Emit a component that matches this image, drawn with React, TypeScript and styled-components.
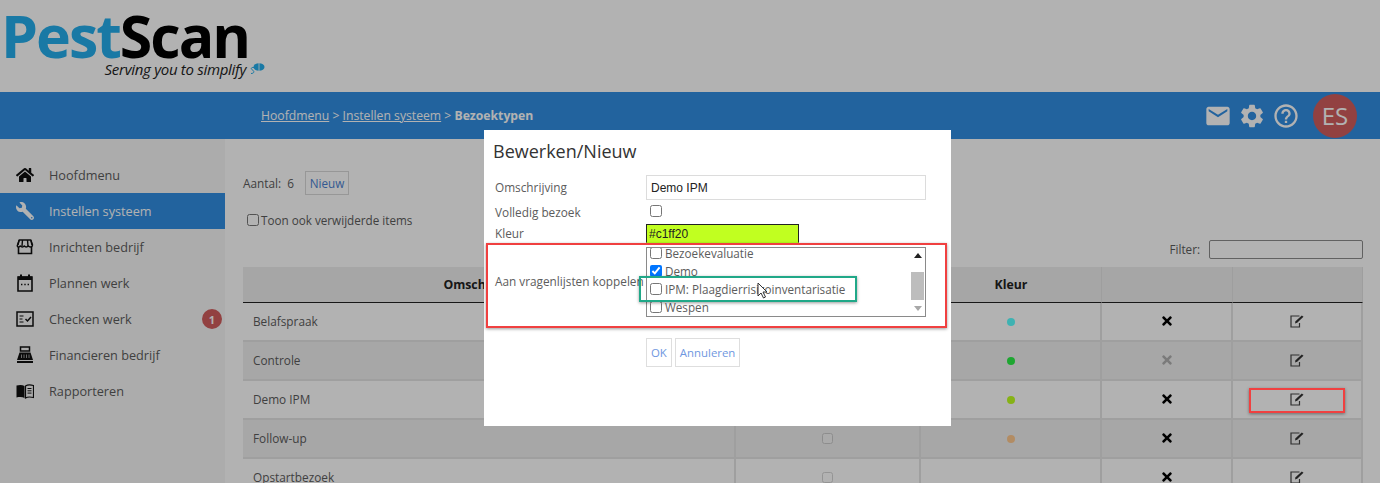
import React from "react";
import styled, { createGlobalStyle } from "styled-components";
import { FaHome, FaWrench, FaTimes } from "react-icons/fa";
import { MdMail, MdSettings, MdHelpOutline } from "react-icons/md";

const GlobalStyle = createGlobalStyle`
  html, body {
    margin: 0;
    padding: 0;
    background: #fff;
    font-family: "Open Sans", "Liberation Sans", sans-serif;
    font-size: 13px;
    color: #5c5c5c;
  }
`;

const Page = styled.div`
  position: relative;
  width: 1380px;
  height: 483px;
  overflow: hidden;
  background: #fff;
`;

const LogoBar = styled.div`
  height: 92px;
  box-sizing: border-box;
  padding-left: 1px;
`;

const LogoWrap = styled.div`
  width: 264px;
`;

const LogoName = styled.div`
  font-size: 59px;
  font-weight: 700;
  line-height: 60px;
  padding-top: 5px;
  letter-spacing: -2px;
  white-space: nowrap;
  color: #000;
  span {
    color: #25aeec;
  }
`;

const LogoTagline = styled.div`
  display: flex;
  align-items: center;
  justify-content: flex-end;
  gap: 3px;
  margin-top: -4px;
  font-size: 15px;
  line-height: 16px;
  font-style: italic;
  letter-spacing: -0.3px;
  color: #222;
`;

const TopBar = styled.div`
  height: 47px;
  display: flex;
  align-items: center;
  box-sizing: border-box;
  padding: 0 23px 0 261px;
  background: #328fe3;
  color: #fff;
`;

const Crumbs = styled.div`
  font-size: 12.2px;
  margin-top: -1px;
  a {
    color: #fff;
    text-decoration: underline;
  }
  strong {
    font-weight: 700;
  }
`;

const TopActions = styled.div`
  margin-left: auto;
  display: flex;
  align-items: center;
  gap: 6px;
  color: #fff;
`;

const Avatar = styled.div`
  width: 44px;
  height: 44px;
  margin-left: 7px;
  border-radius: 50%;
  background: #d25d5d;
  display: flex;
  align-items: center;
  justify-content: center;
  font-size: 24px;
  color: #fff;
`;

const Body = styled.div`
  display: flex;
`;

const Sidebar = styled.nav`
  width: 225px;
  height: 344px;
  flex: none;
  box-sizing: border-box;
  padding-top: 18px;
  background: #f7f7f7;
`;

const NavItem = styled.div<{ $active?: boolean }>`
  position: relative;
  height: 36px;
  display: flex;
  align-items: center;
  box-sizing: border-box;
  padding-left: 16px;
  gap: 15px;
  font-size: 12.7px;
  background: ${(p) => (p.$active ? "#328fe3" : "transparent")};
  color: ${(p) => (p.$active ? "#fff" : "#5c5c5c")};
  svg {
    flex: none;
    color: ${(p) => (p.$active ? "#fff" : "#111")};
  }
`;

const NavBadge = styled.span`
  position: absolute;
  right: 3px;
  top: 8px;
  width: 20px;
  height: 20px;
  border-radius: 50%;
  background: #d25d5d;
  color: #fff;
  font-size: 11px;
  font-weight: 700;
  display: flex;
  align-items: center;
  justify-content: center;
`;

const Content = styled.main`
  flex: 1;
  box-sizing: border-box;
  padding: 32px 17px 0 18px;
`;

const CountRow = styled.div`
  display: flex;
  align-items: center;
  height: 24px;
  font-size: 11.8px;
`;

const NewButton = styled.button`
  margin-left: 11px;
  width: 44px;
  height: 24px;
  padding: 0;
  background: #fff;
  border: 1px solid #d8d8d8;
  color: #4a7fd0;
  font: 11.7px "Open Sans", sans-serif;
`;

const ToggleRow = styled.label`
  display: flex;
  align-items: center;
  gap: 2px;
  height: 20px;
  margin-top: 15px;
  margin-left: 4px;
  font-size: 11.7px;
`;

const Check = styled.input.attrs({ type: "checkbox" })`
  width: 12px;
  height: 12px;
  margin: 0;
  flex: none;
`;

const FilterRow = styled.div`
  display: flex;
  justify-content: flex-end;
  align-items: center;
  gap: 9px;
  height: 20px;
  margin-top: 9px;
  font-size: 11.7px;
`;

const FilterInput = styled.input`
  width: 154px;
  height: 19px;
  box-sizing: border-box;
  border: 1px solid #8c8c8c;
  border-radius: 2px;
  background: #fff;
`;

const Table = styled.table`
  width: 1120px;
  margin-top: 8px;
  table-layout: fixed;
  border-collapse: separate;
  border-spacing: 0;
`;

const Col = styled.col<{ $w: number }>`
  width: ${(p) => p.$w}px;
`;

const Th = styled.th`
  height: 35px;
  padding: 0;
  background: #eeeeee;
  border-bottom: 1px solid #222;
  border-right: 1px solid #e2e2e2;
  color: #222;
  font-size: 12.3px;
  font-weight: 700;
  text-align: center;
  &:first-child {
    padding-right: 10px;
  }
`;

const Row = styled.tr<{ $alt: boolean }>`
  background: ${(p) => (p.$alt ? "#f0f0f0" : "#fff")};
`;

const Td = styled.td<{ $left?: boolean }>`
  height: 39px;
  box-sizing: border-box;
  padding: 0 0 ${(p) => (p.$left ? "2px 10px" : "0 0")};
  border-bottom: 2px solid #e4e4e4;
  border-right: 2px solid #e4e4e4;
  text-align: ${(p) => (p.$left ? "left" : "center")};
  font-size: 11.8px;
  vertical-align: middle;
`;

const Dot = styled.span<{ $color: string }>`
  display: inline-block;
  width: 8px;
  height: 8px;
  margin-bottom: 1px;
  border-radius: 50%;
  background: ${(p) => p.$color};
`;

const RowCheck = styled(Check)`
  width: 11px;
  height: 11px;
  margin-bottom: 3px;
  vertical-align: middle;
  opacity: 0.3;
`;

const Delete = styled(FaTimes)<{ $muted: boolean }>`
  color: ${(p) => (p.$muted ? "#b0b0b0" : "#000")};
  vertical-align: middle;
  margin-bottom: 3px;
`;

const Backdrop = styled.div`
  position: absolute;
  inset: 0;
  background: rgba(0, 0, 0, 0.3);
`;

const Modal = styled.div`
  position: absolute;
  left: 484px;
  top: 130px;
  width: 467px;
  height: 296px;
  box-sizing: border-box;
  padding: 9px 25px 0 11px;
  background: #fff;
`;

const ModalTitle = styled.h2`
  margin: 0 0 0 -2px;
  font-size: 18px;
  font-weight: 400;
  line-height: 24px;
  color: #333;
`;

const FormGrid = styled.div`
  display: grid;
  grid-template-columns: 151px 280px;
  grid-template-rows: 25px 24px 19px 74px;
  margin-top: 12px;
  align-items: center;
  font-size: 11.8px;
  color: #5c5c5c;
`;

const FieldLabel = styled.span`
  margin-bottom: 2px;
`;

const TextInput = styled.input`
  width: 280px;
  height: 25px;
  box-sizing: border-box;
  padding: 0 4px;
  border: 1px solid #dcdcdc;
  font: 12px "Liberation Sans", Arial, sans-serif;
  color: #222;
`;

const FormCheck = styled(Check)`
  margin-left: 4px;
  margin-top: -2px;
`;

const ColorInput = styled.input`
  width: 153px;
  height: 19px;
  box-sizing: border-box;
  padding: 0 2px;
  border: 1px solid #222;
  border-bottom-color: #b9ff1f;
  background: #c1ff20;
  font: 12px "Liberation Sans", Arial, sans-serif;
  color: #222;
`;

const ListLabel = styled.div`
  grid-row: 4;
  align-self: center;
  margin-top: 2px;
  white-space: nowrap;
`;

const ListBox = styled.div`
  grid-row: 4;
  grid-column: 2;
  align-self: start;
  margin-top: 4px;
  height: 70px;
  box-sizing: border-box;
  display: flex;
  border: 1px solid #8a8a8a;
  overflow: hidden;
  background: #fff;
`;

const ListRows = styled.div`
  flex: 1;
  overflow: hidden;
  padding-left: 3px;
`;

const ListRowsInner = styled.div`
  margin-top: -4px;
`;

const ListRow = styled.label`
  display: flex;
  align-items: center;
  gap: 3px;
  height: 18px;
  font-size: 11.7px;
  color: #5c5c5c;
  white-space: nowrap;
`;

const Scrollbar = styled.div`
  width: 15px;
  flex: none;
  display: flex;
  flex-direction: column;
  align-items: center;
  justify-content: space-between;
  padding: 5px 0;
  box-sizing: border-box;
  position: relative;
  background: #fff;
`;

const ArrowUp = styled.span`
  width: 0;
  height: 0;
  border-left: 4px solid transparent;
  border-right: 4px solid transparent;
  border-bottom: 5px solid #222;
`;

const ArrowDown = styled.span`
  width: 0;
  height: 0;
  border-left: 4px solid transparent;
  border-right: 4px solid transparent;
  border-top: 5px solid #a8a8a8;
`;

const ScrollThumb = styled.div`
  position: absolute;
  left: 1px;
  top: 24px;
  width: 13px;
  height: 28px;
  background: #bdbdbd;
`;

const ModalActions = styled.div`
  display: flex;
  gap: 3px;
  margin-top: 21px;
  margin-left: 151px;
`;

const ModalButton = styled.button`
  height: 29px;
  padding: 0 4px;
  background: #fff;
  border: 1px solid #dedede;
  color: #6f97e0;
  font: 11.4px "Open Sans", sans-serif;
`;

const Mark = styled.div<{ $x: number; $y: number; $w: number; $h: number; $color: string }>`
  position: absolute;
  left: ${(p) => p.$x}px;
  top: ${(p) => p.$y}px;
  width: ${(p) => p.$w}px;
  height: ${(p) => p.$h}px;
  box-sizing: border-box;
  border: 2px solid ${(p) => p.$color};
  box-shadow: 0 1px 3px rgba(0, 0, 0, 0.4);
`;

const Cursor = styled.svg`
  position: absolute;
  left: 757px;
  top: 282px;
`;

const EditSvg = styled.svg`
  vertical-align: middle;
  margin-bottom: 2px;
`;

const BugMark = () => (
  <svg width="16" height="14" viewBox="0 0 16 14">
    <ellipse cx="10" cy="5" rx="5.500" ry="3.800" fill="#25aeec" />
    <rect x="9.600" y="1" width="0.800" height="8" fill="#fff" />
    <path d="M5 5.500C2 5 1.500 7 3.500 8 5.500 9 5.500 11.500 2 11.500" fill="none" stroke="#25aeec" strokeWidth="1" />
  </svg>
);

const StoreIcon = () => (
  <svg width="18" height="18" viewBox="0 0 18 18">
    <path d="M3.200 2h11.600l1.700 4.800c0 1.500-1.200 2.200-2.200 2.200-.9 0-1.600-.5-2-1.100-.4.600-1.200 1.100-2.100 1.100-.8 0-1.600-.5-1.900-1.100-.4.600-1.100 1.100-2 1.100s-1.600-.5-2-1.100C3.900 8.500 3.200 9 2.600 9 1.600 9 .8 8 1.500 6.800z" fill="#f7f7f7" stroke="#111" strokeWidth="1.400" strokeLinejoin="round" />
    <path d="M6.500 2 6 8M11.500 2l.5 6M3.200 2 2 7M14.800 2 16 7" stroke="#111" strokeWidth="1.400" fill="none" />
    <path d="M2.500 9v6.500h13V9" fill="none" stroke="#111" strokeWidth="1.600" />
  </svg>
);

const CalendarIcon = () => (
  <svg width="18" height="18" viewBox="0 0 18 18">
    <path d="M2 3h14v14H2z" fill="none" stroke="#111" strokeWidth="1.600" />
    <path d="M2 2.500h14v3.500H2z" fill="#111" />
    <rect x="4" y="0.500" width="2" height="3" fill="#111" />
    <rect x="12" y="0.500" width="2" height="3" fill="#111" />
    <path d="M5 10.500h1.400M8.300 10.500h1.400M11.600 10.500h1.400" stroke="#111" strokeWidth="1.300" />
  </svg>
);

const ChecklistIcon = () => (
  <svg width="18" height="18" viewBox="0 0 18 18">
    <rect x="1" y="2" width="16" height="14" fill="none" stroke="#111" strokeWidth="1.500" />
    <path d="M3.500 6h4M3.500 9h3M3.500 12h4" stroke="#111" strokeWidth="1.200" />
    <path d="M9.500 9l2 2 3.500-4" fill="none" stroke="#111" strokeWidth="1.500" />
  </svg>
);

const RegisterIcon = () => (
  <svg width="18" height="18" viewBox="0 0 18 18">
    <path d="M4.500 1h9v4h-9z" fill="none" stroke="#111" strokeWidth="1.500" />
    <path d="M3.500 6.500h11L17 14H1z" fill="#111" />
    <path d="M5.500 8.500v3.500M8 8.500v3.500M10.500 8.500v3.500M13 8.500v3.500" stroke="#aaa" strokeWidth="0.900" />
    <rect x="1" y="15" width="16" height="2" fill="#111" />
  </svg>
);

const BookIcon = () => (
  <svg width="18" height="18" viewBox="0 0 18 18">
    <path d="M0.500 3.500c3-.8 6-.8 8 .5v12c-2-1.200-5-1.200-8-.5z" fill="#111" />
    <path d="M9.500 4c2-1.300 5-1.300 8-.5v12c-3-.7-6-.7-8 .5z" fill="#f7f7f7" stroke="#111" strokeWidth="1.200" />
    <path d="M11.500 6.500h4M11.500 8.800h4M11.500 11.100h4" stroke="#111" strokeWidth="1" />
  </svg>
);

const EditIcon = () => (
  <EditSvg width="14" height="13" viewBox="0 0 14 13">
    <path d="M9.500 1H1v11h8.500V8" fill="none" stroke="#444" strokeWidth="1.200" />
    <path d="M5 8.500l.5-2.300L11.800.5 13.500 1.800 7.200 7.800z" fill="#333" />
  </EditSvg>
);

const navItems = [
  { label: "Hoofdmenu", icon: <FaHome size={18} /> },
  { label: "Instellen systeem", icon: <FaWrench size={18} style={{ transform: "scaleX(-1)" }} />, active: true },
  { label: "Inrichten bedrijf", icon: <StoreIcon /> },
  { label: "Plannen werk", icon: <CalendarIcon /> },
  { label: "Checken werk", icon: <ChecklistIcon />, badge: "1" },
  { label: "Financieren bedrijf", icon: <RegisterIcon /> },
  { label: "Rapporteren", icon: <BookIcon /> },
];

const rows = [
  { name: "Belafspraak", color: "#5affff", muted: false },
  { name: "Controle", color: "#2bee47", muted: true },
  { name: "Demo IPM", color: "#c1ff20", muted: false },
  { name: "Follow-up", color: "#ffc98f", muted: false },
  { name: "Opstartbezoek", color: "#ffffff", muted: false },
];

const questionnaires = [
  { label: "Bezoekevaluatie", checked: false },
  { label: "Demo", checked: true },
  { label: "IPM: Plaagdierrisicoinventarisatie", checked: false },
  { label: "Wespen", checked: false },
];

export default function App() {
  return (
    <Page>
      <GlobalStyle />
      <LogoBar>
        <LogoWrap>
          <LogoName>
            <span>Pest</span>Scan
          </LogoName>
          <LogoTagline>
            Serving you to simplify
            <BugMark />
          </LogoTagline>
        </LogoWrap>
      </LogoBar>
      <TopBar>
        <Crumbs>
          <a>Hoofdmenu</a> &gt; <a>Instellen systeem</a> &gt; <strong>Bezoektypen</strong>
        </Crumbs>
        <TopActions>
          <MdMail size={28} />
          <MdSettings size={28} />
          <MdHelpOutline size={28} />
          <Avatar>ES</Avatar>
        </TopActions>
      </TopBar>
      <Body>
        <Sidebar>
          {navItems.map((item) => (
            <NavItem key={item.label} $active={item.active}>
              {item.icon}
              {item.label}
              {item.badge && <NavBadge>{item.badge}</NavBadge>}
            </NavItem>
          ))}
        </Sidebar>
        <Content>
          <CountRow>
            Aantal:&nbsp; 6
            <NewButton>Nieuw</NewButton>
          </CountRow>
          <ToggleRow>
            <Check />
            Toon ook verwijderde items
          </ToggleRow>
          <FilterRow>
            Filter:
            <FilterInput />
          </FilterRow>
          <Table>
            <colgroup>
              <Col $w={493} />
              <Col $w={185} />
              <Col $w={181} />
              <Col $w={131} />
              <Col $w={130} />
            </colgroup>
            <thead>
              <tr>
                <Th>Omschrijving</Th>
                <Th>Volledig bezoek</Th>
                <Th>Kleur</Th>
                <Th />
                <Th />
              </tr>
            </thead>
            <tbody>
              {rows.map((row, i) => (
                <Row key={row.name} $alt={i % 2 === 1}>
                  <Td $left>{row.name}</Td>
                  <Td>
                    <RowCheck />
                  </Td>
                  <Td>
                    <Dot $color={row.color} />
                  </Td>
                  <Td>
                    <Delete size={14} $muted={row.muted} />
                  </Td>
                  <Td>
                    <EditIcon />
                  </Td>
                </Row>
              ))}
            </tbody>
          </Table>
        </Content>
      </Body>
      <Backdrop />
      <Modal>
        <ModalTitle>Bewerken/Nieuw</ModalTitle>
        <FormGrid>
          <FieldLabel>Omschrijving</FieldLabel>
          <TextInput defaultValue="Demo IPM" />
          <span>Volledig bezoek</span>
          <FormCheck />
          <FieldLabel>Kleur</FieldLabel>
          <ColorInput defaultValue="#c1ff20" />
          <ListLabel>Aan vragenlijsten koppelen</ListLabel>
          <ListBox>
            <ListRows>
              <ListRowsInner>
                {questionnaires.map((q) => (
                  <ListRow key={q.label}>
                    <Check defaultChecked={q.checked} />
                    {q.label}
                  </ListRow>
                ))}
              </ListRowsInner>
            </ListRows>
            <Scrollbar>
              <ArrowUp />
              <ScrollThumb />
              <ArrowDown />
            </Scrollbar>
          </ListBox>
        </FormGrid>
        <ModalActions>
          <ModalButton>OK</ModalButton>
          <ModalButton>Annuleren</ModalButton>
        </ModalActions>
      </Modal>
      <Mark $x={486} $y={243} $w={461} $h={85} $color="#f04040" />
      <Mark $x={639} $y={276} $w={218} $h={26} $color="#20a888" />
      <Mark $x={1249} $y={388} $w={96} $h={25} $color="#f04040" />
      <Cursor width="12" height="18" viewBox="0 0 12 18">
        <path d="M1 1v13l3-3 2.500 5 2-1-2.500-5h4z" fill="#fff" stroke="#333" strokeWidth="1" />
      </Cursor>
    </Page>
  );
}
